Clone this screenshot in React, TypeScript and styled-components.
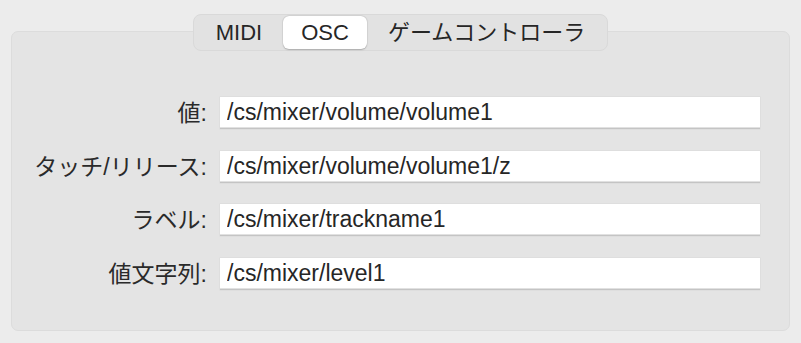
import React, { useState } from "react";
import styled, { createGlobalStyle } from "styled-components";

const Global = createGlobalStyle`
  html, body { margin: 0; padding: 0; background: #ececec; }
  body { font-family: "Liberation Sans", "Noto Sans CJK JP", sans-serif; }
`;

const Page = styled.div`
  height: 343px;
  box-sizing: border-box;
  padding: 14px 11px 12px;
  display: flex;
  flex-direction: column;
  align-items: stretch;
`;

const TabBar = styled.div`
  align-self: center;
  position: relative;
  z-index: 1;
  display: flex;
  height: 37px;
  box-sizing: border-box;
  padding: 1px;
  background: #e2e2e2;
  border: 1px solid #d9d9d9;
  border-radius: 8px;
`;

const Tab = styled.button<{ $active?: boolean }>`
  border: none;
  margin: 0;
  padding: 0 ${(p) => (p.$active ? 18 : 21)}px;
  height: 100%;
  font-family: "Liberation Sans", "Noto Sans CJK JP", sans-serif;
  font-size: 22px;
  line-height: 1;
  color: #262626;
  background: ${(p) => (p.$active ? "#ffffff" : "transparent")};
  border-radius: 6px;
  box-shadow: ${(p) =>
    p.$active ? "0 0.5px 1.5px rgba(0,0,0,0.22), 0 0 0 0.5px rgba(0,0,0,0.06)" : "none"};
  cursor: pointer;
`;

const Panel = styled.div`
  flex: 1;
  margin-top: -20px;
  box-sizing: border-box;
  background: #e4e4e4;
  border: 1px solid #dcdcdc;
  border-radius: 7px;
  padding: 65px 0 0;
`;

const Form = styled.div`
  display: grid;
  grid-template-columns: 197px 540px;
  grid-auto-rows: 32px;
  column-gap: 11px;
  row-gap: 21.6px;
  align-items: center;
`;

const Label = styled.label`
  text-align: right;
  font-size: 23px;
  line-height: 32px;
  height: 32px;
  color: #2a2a2a;
  white-space: nowrap;
  padding-right: 2px;
`;

const Field = styled.input`
  height: 32px;
  box-sizing: border-box;
  border: none;
  outline: none;
  margin: 0;
  padding: 0 7px 1px;
  background: #ffffff;
  box-shadow: inset 0 -1.5px 0 #c4c4c4, 0 0 0 0.5px rgba(0, 0, 0, 0.05);
  font-family: "Liberation Sans", "Noto Sans CJK JP", sans-serif;
  font-size: 23px;
  color: #262626;
`;

const rows = [
  { label: "値:", value: "/cs/mixer/volume/volume1" },
  { label: "タッチ/リリース:", value: "/cs/mixer/volume/volume1/z" },
  { label: "ラベル:", value: "/cs/mixer/trackname1" },
  { label: "値文字列:", value: "/cs/mixer/level1" },
];

export default function App() {
  const [tab, setTab] = useState("OSC");
  return (
    <>
      <Global />
      <Page>
        <TabBar>
          {["MIDI", "OSC", "ゲームコントローラ"].map((t) => (
            <Tab key={t} $active={tab === t} onClick={() => setTab(t)}>
              {t}
            </Tab>
          ))}
        </TabBar>
        <Panel>
          <Form>
            {rows.map((r) => (
              <React.Fragment key={r.label}>
                <Label>{r.label}</Label>
                <Field defaultValue={r.value} />
              </React.Fragment>
            ))}
          </Form>
        </Panel>
      </Page>
    </>
  );
}
